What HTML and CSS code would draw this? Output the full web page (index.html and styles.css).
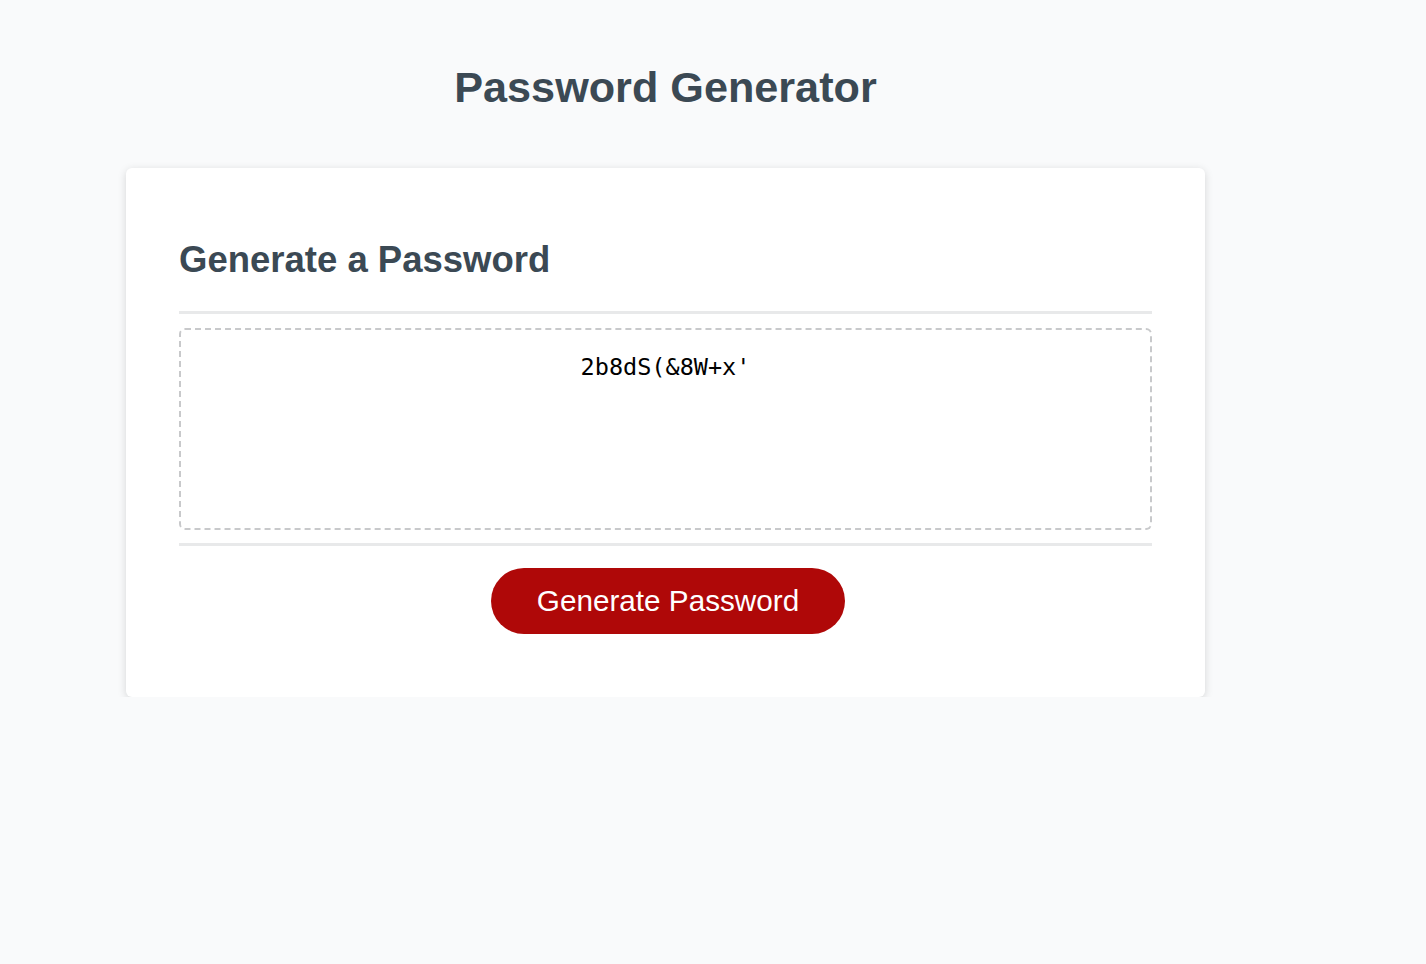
FILE: index.html
```html
<!DOCTYPE html>
<html lang="en">
<head>
<meta charset="UTF-8">
<title>Password Generator</title>
<link rel="stylesheet" href="styles.css">
</head>
<body>
<div class="wrapper">
  <header class="page-header">
    <h1 class="page-title">Password Generator</h1>
  </header>
  <div class="card">
    <div class="card-header">
      <h2 class="card-title">Generate a Password</h2>
    </div>
    <div class="card-body">
      <textarea class="password-box" readonly>2b8dS(&amp;8W+x'</textarea>
    </div>
    <div class="card-footer">
      <button class="btn" type="button">Generate Password</button>
    </div>
  </div>
</div>
</body>
</html>
```
FILE: styles.css
```css
*, *::before, *::after { box-sizing: border-box; }
html, body { margin: 0; padding: 0; }
body {
  background: #f9fafb;
  font-family: "Liberation Sans", Arial, sans-serif;
  color: #3b4954;
}
.wrapper {
  width: 1079px;
  margin-left: 126px;
}
.page-header {
  text-align: center;
  padding-top: 63px;
  padding-bottom: 57px;
}
.page-title {
  margin: 0;
  font-size: 43.2px;
  font-weight: 700;
  line-height: 48px;
  color: #3b4954;
}
.card {
  background: #fff;
  border-radius: 6px;
  box-shadow: rgba(0, 0, 0, 0.15) 0 2px 8px 0;
  padding: 71px 53px 63px;
}
.card-title {
  margin: 0;
  font-size: 36.5px;
  font-weight: 700;
  line-height: 41px;
  color: #3b4954;
}
.card-header::after {
  content: "";
  display: block;
  height: 3px;
  background: #e8e9ea;
  margin-top: 31px;
}
.card-body {
  padding-top: 14px;
}
.password-box {
  display: block;
  width: 100%;
  height: 202px;
  border: 2px dashed #c8c9cb;
  border-radius: 6px;
  resize: none;
  text-align: center;
  font-family: "DejaVu Sans Mono", "Liberation Mono", monospace;
  font-size: 23.5px;
  line-height: 28px;
  padding: 23px 10px 21px;
  color: #000;
  background: #fff;
  outline: none;
  overflow: hidden;
}
.card-footer {
  text-align: center;
  padding-top: 13px;
}
.card-footer::before {
  content: "";
  display: block;
  height: 3px;
  background: #e8e9ea;
  margin-bottom: 22px;
}
.btn {
  border: none;
  background: #af0808;
  color: #fff;
  border-radius: 34px;
  font-family: "Liberation Sans", Arial, sans-serif;
  font-size: 29.7px;
  line-height: 34px;
  height: 66px;
  padding: 0 46px;
  margin-left: 5px;
  cursor: pointer;
}
```
